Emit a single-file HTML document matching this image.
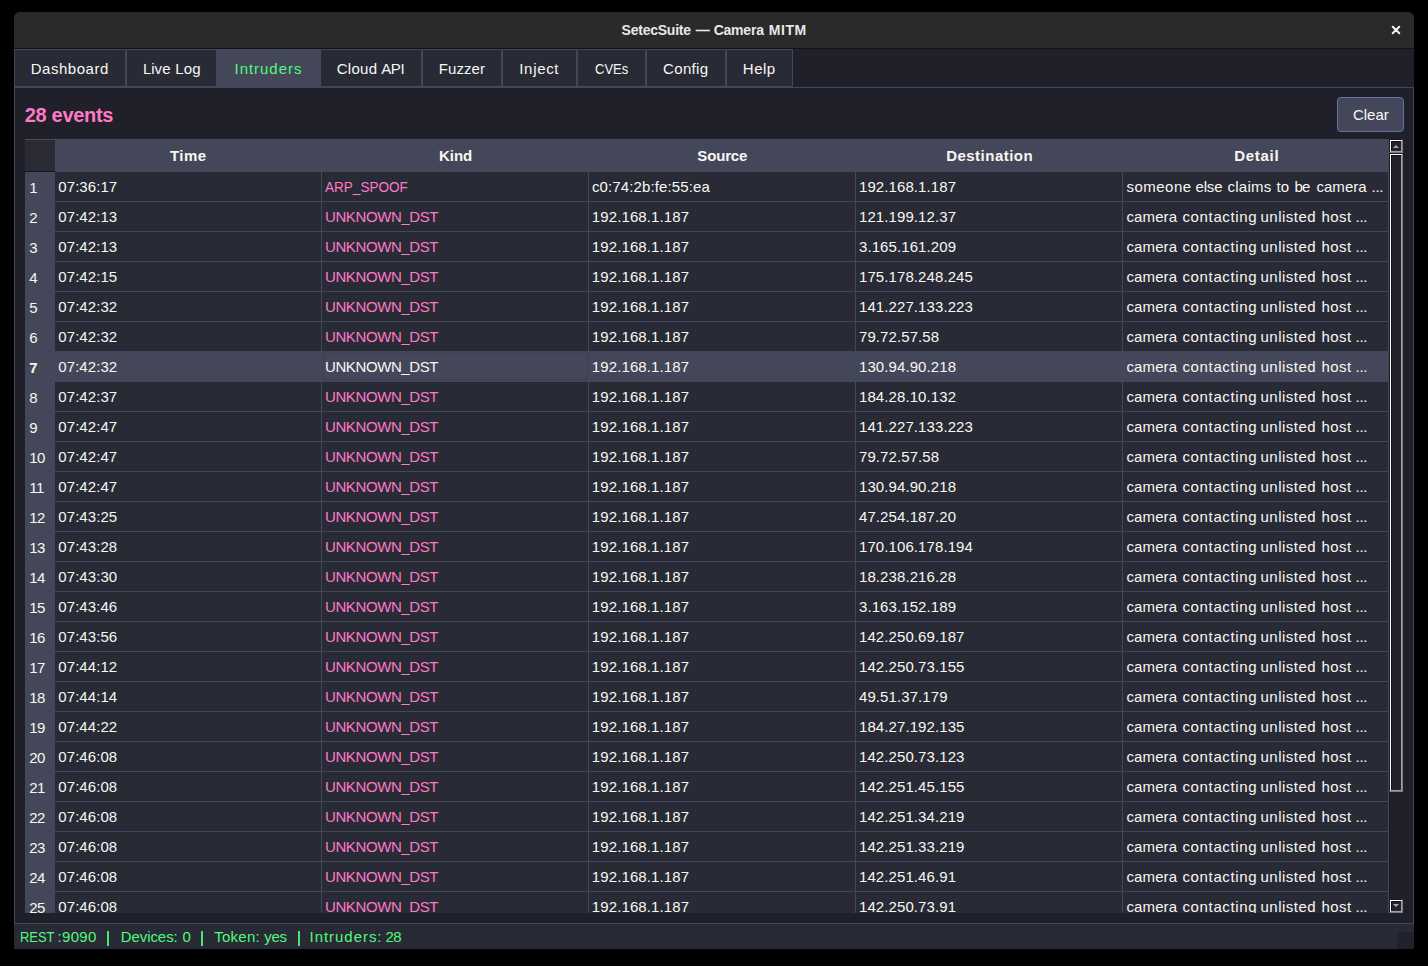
<!DOCTYPE html><html><head><meta charset="utf-8"><style>
*{margin:0;padding:0;box-sizing:border-box}
html,body{width:1428px;height:966px;background:#000;overflow:hidden}
body{position:relative;font-family:"Liberation Sans",sans-serif;font-size:15px;color:#f8f8f2}
.a{position:absolute}
.t{position:absolute;white-space:nowrap;line-height:17px;height:17px}
.b{font-weight:bold}
.win{left:14px;top:12px;width:1400px;height:937px;background:#1f2029;border-radius:6px 6px 0 0}
.title{left:14px;top:12px;width:1400px;height:36px;background:#2a2a2a;border-radius:6px 6px 0 0}
.tline{left:14px;top:48px;width:1400px;height:1px;background:#121212}
.tab{top:49px;height:38px;background:#282a36;border:1px solid #44475a}
.tab.sel{background:#44475a;border-color:#44475a}
.pane{left:14px;top:87px;width:1400px;height:837px;border:1px solid #44475a;background:#1f2029}
.btn{left:1337px;top:97px;width:67px;height:35px;background:#44475a;border:1px solid #6272a4;border-radius:4px}
.tbl{left:25px;top:139px;width:1364px;height:774px;overflow:hidden;background:#282a36}
.corner{left:0;top:0;width:30px;height:33px;background:#2a2b34;border-top:1px solid #4b4c58;border-bottom:1px solid #16161c}
.hdr{left:30px;top:0;width:1334px;height:33px;background:#44475a}
.vh{left:0;top:33px;width:30px;height:760px;background:#44475a}
.hl{left:30px;width:1334px;height:1px;background:#44475a}
.vl{top:33px;width:1px;height:760px;background:#44475a}
.pink{color:#ff79c6}
.sb{left:14px;top:924px;width:1400px;height:25px;background:#282a36}
.green{color:#50fa7b}
.grip{left:1397px;top:932px;width:17px;height:17px;background:#21222c}
</style></head><body>
<div class="a win"></div>
<div class="a title"></div><div class="a tline"></div>
<div class="t b" style="left:621.62px;top:21.6px;letter-spacing:-0.24px;font-size:14px;color:#e8e8e8">SetecSuite</div>
<div class="t b" style="left:695.74px;top:21.6px;letter-spacing:0.0px;font-size:14px;color:#e8e8e8">—</div>
<div class="t b" style="left:713.67px;top:21.6px;letter-spacing:-0.216px;font-size:14px;color:#e8e8e8">Camera</div>
<div class="t b" style="left:768.84px;top:21.6px;letter-spacing:0.51px;font-size:14px;color:#e8e8e8">MITM</div>
<svg class="a" style="left:1390px;top:24px" width="12" height="12" viewBox="0 0 12 12"><path d="M2.7 2.7L9.3 9.3M9.3 2.7L2.7 9.3" stroke="#f0f0f0" stroke-width="2" stroke-linecap="round"/></svg>
<div class="a pane"></div>
<div class="a tab" style="left:14px;width:112px"></div>
<div class="t " style="left:30.74px;top:60.0px;letter-spacing:0.529px">Dashboard</div>
<div class="a tab" style="left:126px;width:91px"></div>
<div class="t " style="left:142.92px;top:60.0px;letter-spacing:0.02px">Live</div>
<div class="t " style="left:175.29px;top:60.0px;letter-spacing:0.11px">Log</div>
<div class="a tab sel" style="left:217px;width:103px"></div>
<div class="t green" style="left:234.55px;top:60.0px;letter-spacing:0.957px">Intruders</div>
<div class="a tab" style="left:320px;width:102px"></div>
<div class="t " style="left:336.66px;top:60.0px;letter-spacing:0.312px">Cloud</div>
<div class="t " style="left:381.19px;top:60.0px;letter-spacing:-0.34px">API</div>
<div class="a tab" style="left:422px;width:80px"></div>
<div class="t " style="left:438.74px;top:60.0px;letter-spacing:0.072px">Fuzzer</div>
<div class="a tab" style="left:502px;width:75px"></div>
<div class="t " style="left:519.28px;top:60.0px;letter-spacing:0.684px">Inject</div>
<div class="a tab" style="left:577px;width:69px"></div>
<div class="t " style="left:594.73px;top:60.0px;letter-spacing:0px;transform:scaleX(0.866);transform-origin:0 0">CVEs</div>
<div class="a tab" style="left:646px;width:80px"></div>
<div class="t " style="left:663.0px;top:60.0px;letter-spacing:0.36px">Config</div>
<div class="a tab" style="left:726px;width:67px"></div>
<div class="t " style="left:742.83px;top:60.0px;letter-spacing:0.48px">Help</div>
<div class="t b pink" style="left:24.73px;top:103.0px;letter-spacing:-0.303px;font-size:20px;line-height:24px;height:24px">28 events</div>
<div class="a btn"></div>
<div class="t " style="left:1352.91px;top:106.1px;letter-spacing:0.017px">Clear</div>
<div class="a tbl">
<div class="a corner"></div><div class="a hdr"></div>
<div class="t b" style="left:144.91px;top:8.0px;letter-spacing:0.51px">Time</div>
<div class="t b" style="left:414.0px;top:8.0px;letter-spacing:-0.03px">Kind</div>
<div class="t b" style="left:672.36px;top:8.0px;letter-spacing:-0.18px">Source</div>
<div class="t b" style="left:921.18px;top:8.0px;letter-spacing:0.477px">Destination</div>
<div class="t b" style="left:1209.18px;top:8.0px;letter-spacing:0.72px">Detail</div>
<div class="a vh"></div>
<div class="a hl" style="top:62px"></div>
<div class="a hl" style="top:92px"></div>
<div class="a hl" style="top:122px"></div>
<div class="a hl" style="top:152px"></div>
<div class="a hl" style="top:182px"></div>
<div class="a hl" style="top:212px"></div>
<div class="a" style="left:30px;top:212px;width:1334px;height:31px;background:#44475a"></div>
<div class="a hl" style="top:242px"></div>
<div class="a hl" style="top:272px"></div>
<div class="a hl" style="top:302px"></div>
<div class="a hl" style="top:332px"></div>
<div class="a hl" style="top:362px"></div>
<div class="a hl" style="top:392px"></div>
<div class="a hl" style="top:422px"></div>
<div class="a hl" style="top:452px"></div>
<div class="a hl" style="top:482px"></div>
<div class="a hl" style="top:512px"></div>
<div class="a hl" style="top:542px"></div>
<div class="a hl" style="top:572px"></div>
<div class="a hl" style="top:602px"></div>
<div class="a hl" style="top:632px"></div>
<div class="a hl" style="top:662px"></div>
<div class="a hl" style="top:692px"></div>
<div class="a hl" style="top:722px"></div>
<div class="a hl" style="top:752px"></div>
<div class="a hl" style="top:782px"></div>
<div class="a vl" style="left:296px"></div>
<div class="a vl" style="left:563px"></div>
<div class="a vl" style="left:830px"></div>
<div class="a vl" style="left:1097px"></div>
<div class="a vl" style="left:1363px"></div>
<div class="a" style="left:298px;top:214px;width:265px;height:27px;border:1px solid #3d4052"></div>
<div class="t " style="left:33.36px;top:39.0px;letter-spacing:0.052px">07:36:17</div>
<div class="t pink" style="left:300.0px;top:39.0px;letter-spacing:0px;transform:scaleX(0.903);transform-origin:0 0">ARP_SPOOF</div>
<div class="t " style="left:566.91px;top:39.0px;letter-spacing:0.121px">c0:74:2b:fe:55:ea</div>
<div class="t " style="left:834.0px;top:39.0px;letter-spacing:0.088px">192.168.1.187</div>
<div class="t" style="left:1101.44px;top:39.0px;letter-spacing:0.495px">someone</div>
<div class="t" style="left:1170.5px;top:39.0px;letter-spacing:-0.15px">else</div>
<div class="t" style="left:1202.48px;top:39.0px;letter-spacing:0.246px">claims</div>
<div class="t" style="left:1251.4px;top:39.0px;letter-spacing:0.12px">to</div>
<div class="t" style="left:1269.46px;top:39.0px;letter-spacing:-0.78px">be</div>
<div class="t" style="left:1291.47px;top:39.0px;letter-spacing:0.03px">camera</div>
<div class="t" style="left:1346.55px;top:39.0px;letter-spacing:-0.285px">...</div>
<div class="t" style="left:4.190000000000001px;top:39.8px;letter-spacing:-0.45px">1</div>
<div class="t " style="left:33.36px;top:69.0px;letter-spacing:0.052px">07:42:13</div>
<div class="t pink" style="left:300.01px;top:69.0px;letter-spacing:-0.405px">UNKNOWN_DST</div>
<div class="t " style="left:566.82px;top:69.0px;letter-spacing:0.112px">192.168.1.187</div>
<div class="t " style="left:834.0px;top:69.0px;letter-spacing:0.088px">121.199.12.37</div>
<div class="t" style="left:1101.44px;top:69.0px;letter-spacing:0.12px">camera</div>
<div class="t" style="left:1157.47px;top:69.0px;letter-spacing:0.64px">contacting</div>
<div class="t" style="left:1235.48px;top:69.0px;letter-spacing:0.504px">unlisted</div>
<div class="t" style="left:1296.5px;top:69.0px;letter-spacing:0.45px">host</div>
<div class="t" style="left:1330.54px;top:69.0px;letter-spacing:-0.285px">...</div>
<div class="t" style="left:4.190000000000001px;top:69.8px;letter-spacing:-0.45px">2</div>
<div class="t " style="left:33.36px;top:99.0px;letter-spacing:0.052px">07:42:13</div>
<div class="t pink" style="left:300.01px;top:99.0px;letter-spacing:-0.405px">UNKNOWN_DST</div>
<div class="t " style="left:566.82px;top:99.0px;letter-spacing:0.112px">192.168.1.187</div>
<div class="t " style="left:834.0px;top:99.0px;letter-spacing:0.088px">3.165.161.209</div>
<div class="t" style="left:1101.44px;top:99.0px;letter-spacing:0.12px">camera</div>
<div class="t" style="left:1157.47px;top:99.0px;letter-spacing:0.64px">contacting</div>
<div class="t" style="left:1235.48px;top:99.0px;letter-spacing:0.504px">unlisted</div>
<div class="t" style="left:1296.5px;top:99.0px;letter-spacing:0.45px">host</div>
<div class="t" style="left:1330.54px;top:99.0px;letter-spacing:-0.285px">...</div>
<div class="t" style="left:4.190000000000001px;top:99.8px;letter-spacing:-0.45px">3</div>
<div class="t " style="left:33.36px;top:129.0px;letter-spacing:0.052px">07:42:15</div>
<div class="t pink" style="left:300.01px;top:129.0px;letter-spacing:-0.405px">UNKNOWN_DST</div>
<div class="t " style="left:566.82px;top:129.0px;letter-spacing:0.112px">192.168.1.187</div>
<div class="t " style="left:834.0px;top:129.0px;letter-spacing:0.088px">175.178.248.245</div>
<div class="t" style="left:1101.44px;top:129.0px;letter-spacing:0.12px">camera</div>
<div class="t" style="left:1157.47px;top:129.0px;letter-spacing:0.64px">contacting</div>
<div class="t" style="left:1235.48px;top:129.0px;letter-spacing:0.504px">unlisted</div>
<div class="t" style="left:1296.5px;top:129.0px;letter-spacing:0.45px">host</div>
<div class="t" style="left:1330.54px;top:129.0px;letter-spacing:-0.285px">...</div>
<div class="t" style="left:4.190000000000001px;top:129.8px;letter-spacing:-0.45px">4</div>
<div class="t " style="left:33.36px;top:159.0px;letter-spacing:0.052px">07:42:32</div>
<div class="t pink" style="left:300.01px;top:159.0px;letter-spacing:-0.405px">UNKNOWN_DST</div>
<div class="t " style="left:566.82px;top:159.0px;letter-spacing:0.112px">192.168.1.187</div>
<div class="t " style="left:834.0px;top:159.0px;letter-spacing:0.088px">141.227.133.223</div>
<div class="t" style="left:1101.44px;top:159.0px;letter-spacing:0.12px">camera</div>
<div class="t" style="left:1157.47px;top:159.0px;letter-spacing:0.64px">contacting</div>
<div class="t" style="left:1235.48px;top:159.0px;letter-spacing:0.504px">unlisted</div>
<div class="t" style="left:1296.5px;top:159.0px;letter-spacing:0.45px">host</div>
<div class="t" style="left:1330.54px;top:159.0px;letter-spacing:-0.285px">...</div>
<div class="t" style="left:4.190000000000001px;top:159.8px;letter-spacing:-0.45px">5</div>
<div class="t " style="left:33.36px;top:189.0px;letter-spacing:0.052px">07:42:32</div>
<div class="t pink" style="left:300.01px;top:189.0px;letter-spacing:-0.405px">UNKNOWN_DST</div>
<div class="t " style="left:566.82px;top:189.0px;letter-spacing:0.112px">192.168.1.187</div>
<div class="t " style="left:834.0px;top:189.0px;letter-spacing:0.088px">79.72.57.58</div>
<div class="t" style="left:1101.44px;top:189.0px;letter-spacing:0.12px">camera</div>
<div class="t" style="left:1157.47px;top:189.0px;letter-spacing:0.64px">contacting</div>
<div class="t" style="left:1235.48px;top:189.0px;letter-spacing:0.504px">unlisted</div>
<div class="t" style="left:1296.5px;top:189.0px;letter-spacing:0.45px">host</div>
<div class="t" style="left:1330.54px;top:189.0px;letter-spacing:-0.285px">...</div>
<div class="t" style="left:4.190000000000001px;top:189.8px;letter-spacing:-0.45px">6</div>
<div class="t " style="left:33.36px;top:219.0px;letter-spacing:0.052px">07:42:32</div>
<div class="t " style="left:300.01px;top:219.0px;letter-spacing:-0.405px">UNKNOWN_DST</div>
<div class="t " style="left:566.82px;top:219.0px;letter-spacing:0.112px">192.168.1.187</div>
<div class="t " style="left:834.0px;top:219.0px;letter-spacing:0.088px">130.94.90.218</div>
<div class="t" style="left:1101.44px;top:219.0px;letter-spacing:0.12px">camera</div>
<div class="t" style="left:1157.47px;top:219.0px;letter-spacing:0.64px">contacting</div>
<div class="t" style="left:1235.48px;top:219.0px;letter-spacing:0.504px">unlisted</div>
<div class="t" style="left:1296.5px;top:219.0px;letter-spacing:0.45px">host</div>
<div class="t" style="left:1330.54px;top:219.0px;letter-spacing:-0.285px">...</div>
<div class="t b" style="left:4.190000000000001px;top:219.8px;letter-spacing:-0.45px">7</div>
<div class="t " style="left:33.36px;top:249.0px;letter-spacing:0.052px">07:42:37</div>
<div class="t pink" style="left:300.01px;top:249.0px;letter-spacing:-0.405px">UNKNOWN_DST</div>
<div class="t " style="left:566.82px;top:249.0px;letter-spacing:0.112px">192.168.1.187</div>
<div class="t " style="left:834.0px;top:249.0px;letter-spacing:0.088px">184.28.10.132</div>
<div class="t" style="left:1101.44px;top:249.0px;letter-spacing:0.12px">camera</div>
<div class="t" style="left:1157.47px;top:249.0px;letter-spacing:0.64px">contacting</div>
<div class="t" style="left:1235.48px;top:249.0px;letter-spacing:0.504px">unlisted</div>
<div class="t" style="left:1296.5px;top:249.0px;letter-spacing:0.45px">host</div>
<div class="t" style="left:1330.54px;top:249.0px;letter-spacing:-0.285px">...</div>
<div class="t" style="left:4.190000000000001px;top:249.8px;letter-spacing:-0.45px">8</div>
<div class="t " style="left:33.36px;top:279.0px;letter-spacing:0.052px">07:42:47</div>
<div class="t pink" style="left:300.01px;top:279.0px;letter-spacing:-0.405px">UNKNOWN_DST</div>
<div class="t " style="left:566.82px;top:279.0px;letter-spacing:0.112px">192.168.1.187</div>
<div class="t " style="left:834.0px;top:279.0px;letter-spacing:0.088px">141.227.133.223</div>
<div class="t" style="left:1101.44px;top:279.0px;letter-spacing:0.12px">camera</div>
<div class="t" style="left:1157.47px;top:279.0px;letter-spacing:0.64px">contacting</div>
<div class="t" style="left:1235.48px;top:279.0px;letter-spacing:0.504px">unlisted</div>
<div class="t" style="left:1296.5px;top:279.0px;letter-spacing:0.45px">host</div>
<div class="t" style="left:1330.54px;top:279.0px;letter-spacing:-0.285px">...</div>
<div class="t" style="left:4.190000000000001px;top:279.8px;letter-spacing:-0.45px">9</div>
<div class="t " style="left:33.36px;top:309.0px;letter-spacing:0.052px">07:42:47</div>
<div class="t pink" style="left:300.01px;top:309.0px;letter-spacing:-0.405px">UNKNOWN_DST</div>
<div class="t " style="left:566.82px;top:309.0px;letter-spacing:0.112px">192.168.1.187</div>
<div class="t " style="left:834.0px;top:309.0px;letter-spacing:0.088px">79.72.57.58</div>
<div class="t" style="left:1101.44px;top:309.0px;letter-spacing:0.12px">camera</div>
<div class="t" style="left:1157.47px;top:309.0px;letter-spacing:0.64px">contacting</div>
<div class="t" style="left:1235.48px;top:309.0px;letter-spacing:0.504px">unlisted</div>
<div class="t" style="left:1296.5px;top:309.0px;letter-spacing:0.45px">host</div>
<div class="t" style="left:1330.54px;top:309.0px;letter-spacing:-0.285px">...</div>
<div class="t" style="left:4.190000000000001px;top:309.8px;letter-spacing:-0.45px">10</div>
<div class="t " style="left:33.36px;top:339.0px;letter-spacing:0.052px">07:42:47</div>
<div class="t pink" style="left:300.01px;top:339.0px;letter-spacing:-0.405px">UNKNOWN_DST</div>
<div class="t " style="left:566.82px;top:339.0px;letter-spacing:0.112px">192.168.1.187</div>
<div class="t " style="left:834.0px;top:339.0px;letter-spacing:0.088px">130.94.90.218</div>
<div class="t" style="left:1101.44px;top:339.0px;letter-spacing:0.12px">camera</div>
<div class="t" style="left:1157.47px;top:339.0px;letter-spacing:0.64px">contacting</div>
<div class="t" style="left:1235.48px;top:339.0px;letter-spacing:0.504px">unlisted</div>
<div class="t" style="left:1296.5px;top:339.0px;letter-spacing:0.45px">host</div>
<div class="t" style="left:1330.54px;top:339.0px;letter-spacing:-0.285px">...</div>
<div class="t" style="left:4.190000000000001px;top:339.8px;letter-spacing:-0.45px">11</div>
<div class="t " style="left:33.36px;top:369.0px;letter-spacing:0.052px">07:43:25</div>
<div class="t pink" style="left:300.01px;top:369.0px;letter-spacing:-0.405px">UNKNOWN_DST</div>
<div class="t " style="left:566.82px;top:369.0px;letter-spacing:0.112px">192.168.1.187</div>
<div class="t " style="left:834.0px;top:369.0px;letter-spacing:0.088px">47.254.187.20</div>
<div class="t" style="left:1101.44px;top:369.0px;letter-spacing:0.12px">camera</div>
<div class="t" style="left:1157.47px;top:369.0px;letter-spacing:0.64px">contacting</div>
<div class="t" style="left:1235.48px;top:369.0px;letter-spacing:0.504px">unlisted</div>
<div class="t" style="left:1296.5px;top:369.0px;letter-spacing:0.45px">host</div>
<div class="t" style="left:1330.54px;top:369.0px;letter-spacing:-0.285px">...</div>
<div class="t" style="left:4.190000000000001px;top:369.8px;letter-spacing:-0.45px">12</div>
<div class="t " style="left:33.36px;top:399.0px;letter-spacing:0.052px">07:43:28</div>
<div class="t pink" style="left:300.01px;top:399.0px;letter-spacing:-0.405px">UNKNOWN_DST</div>
<div class="t " style="left:566.82px;top:399.0px;letter-spacing:0.112px">192.168.1.187</div>
<div class="t " style="left:834.0px;top:399.0px;letter-spacing:0.088px">170.106.178.194</div>
<div class="t" style="left:1101.44px;top:399.0px;letter-spacing:0.12px">camera</div>
<div class="t" style="left:1157.47px;top:399.0px;letter-spacing:0.64px">contacting</div>
<div class="t" style="left:1235.48px;top:399.0px;letter-spacing:0.504px">unlisted</div>
<div class="t" style="left:1296.5px;top:399.0px;letter-spacing:0.45px">host</div>
<div class="t" style="left:1330.54px;top:399.0px;letter-spacing:-0.285px">...</div>
<div class="t" style="left:4.190000000000001px;top:399.8px;letter-spacing:-0.45px">13</div>
<div class="t " style="left:33.36px;top:429.0px;letter-spacing:0.052px">07:43:30</div>
<div class="t pink" style="left:300.01px;top:429.0px;letter-spacing:-0.405px">UNKNOWN_DST</div>
<div class="t " style="left:566.82px;top:429.0px;letter-spacing:0.112px">192.168.1.187</div>
<div class="t " style="left:834.0px;top:429.0px;letter-spacing:0.088px">18.238.216.28</div>
<div class="t" style="left:1101.44px;top:429.0px;letter-spacing:0.12px">camera</div>
<div class="t" style="left:1157.47px;top:429.0px;letter-spacing:0.64px">contacting</div>
<div class="t" style="left:1235.48px;top:429.0px;letter-spacing:0.504px">unlisted</div>
<div class="t" style="left:1296.5px;top:429.0px;letter-spacing:0.45px">host</div>
<div class="t" style="left:1330.54px;top:429.0px;letter-spacing:-0.285px">...</div>
<div class="t" style="left:4.190000000000001px;top:429.8px;letter-spacing:-0.45px">14</div>
<div class="t " style="left:33.36px;top:459.0px;letter-spacing:0.052px">07:43:46</div>
<div class="t pink" style="left:300.01px;top:459.0px;letter-spacing:-0.405px">UNKNOWN_DST</div>
<div class="t " style="left:566.82px;top:459.0px;letter-spacing:0.112px">192.168.1.187</div>
<div class="t " style="left:834.0px;top:459.0px;letter-spacing:0.088px">3.163.152.189</div>
<div class="t" style="left:1101.44px;top:459.0px;letter-spacing:0.12px">camera</div>
<div class="t" style="left:1157.47px;top:459.0px;letter-spacing:0.64px">contacting</div>
<div class="t" style="left:1235.48px;top:459.0px;letter-spacing:0.504px">unlisted</div>
<div class="t" style="left:1296.5px;top:459.0px;letter-spacing:0.45px">host</div>
<div class="t" style="left:1330.54px;top:459.0px;letter-spacing:-0.285px">...</div>
<div class="t" style="left:4.190000000000001px;top:459.8px;letter-spacing:-0.45px">15</div>
<div class="t " style="left:33.36px;top:489.0px;letter-spacing:0.052px">07:43:56</div>
<div class="t pink" style="left:300.01px;top:489.0px;letter-spacing:-0.405px">UNKNOWN_DST</div>
<div class="t " style="left:566.82px;top:489.0px;letter-spacing:0.112px">192.168.1.187</div>
<div class="t " style="left:834.0px;top:489.0px;letter-spacing:0.088px">142.250.69.187</div>
<div class="t" style="left:1101.44px;top:489.0px;letter-spacing:0.12px">camera</div>
<div class="t" style="left:1157.47px;top:489.0px;letter-spacing:0.64px">contacting</div>
<div class="t" style="left:1235.48px;top:489.0px;letter-spacing:0.504px">unlisted</div>
<div class="t" style="left:1296.5px;top:489.0px;letter-spacing:0.45px">host</div>
<div class="t" style="left:1330.54px;top:489.0px;letter-spacing:-0.285px">...</div>
<div class="t" style="left:4.190000000000001px;top:489.8px;letter-spacing:-0.45px">16</div>
<div class="t " style="left:33.36px;top:519.0px;letter-spacing:0.052px">07:44:12</div>
<div class="t pink" style="left:300.01px;top:519.0px;letter-spacing:-0.405px">UNKNOWN_DST</div>
<div class="t " style="left:566.82px;top:519.0px;letter-spacing:0.112px">192.168.1.187</div>
<div class="t " style="left:834.0px;top:519.0px;letter-spacing:0.088px">142.250.73.155</div>
<div class="t" style="left:1101.44px;top:519.0px;letter-spacing:0.12px">camera</div>
<div class="t" style="left:1157.47px;top:519.0px;letter-spacing:0.64px">contacting</div>
<div class="t" style="left:1235.48px;top:519.0px;letter-spacing:0.504px">unlisted</div>
<div class="t" style="left:1296.5px;top:519.0px;letter-spacing:0.45px">host</div>
<div class="t" style="left:1330.54px;top:519.0px;letter-spacing:-0.285px">...</div>
<div class="t" style="left:4.190000000000001px;top:519.8px;letter-spacing:-0.45px">17</div>
<div class="t " style="left:33.36px;top:549.0px;letter-spacing:0.052px">07:44:14</div>
<div class="t pink" style="left:300.01px;top:549.0px;letter-spacing:-0.405px">UNKNOWN_DST</div>
<div class="t " style="left:566.82px;top:549.0px;letter-spacing:0.112px">192.168.1.187</div>
<div class="t " style="left:834.0px;top:549.0px;letter-spacing:0.088px">49.51.37.179</div>
<div class="t" style="left:1101.44px;top:549.0px;letter-spacing:0.12px">camera</div>
<div class="t" style="left:1157.47px;top:549.0px;letter-spacing:0.64px">contacting</div>
<div class="t" style="left:1235.48px;top:549.0px;letter-spacing:0.504px">unlisted</div>
<div class="t" style="left:1296.5px;top:549.0px;letter-spacing:0.45px">host</div>
<div class="t" style="left:1330.54px;top:549.0px;letter-spacing:-0.285px">...</div>
<div class="t" style="left:4.190000000000001px;top:549.8px;letter-spacing:-0.45px">18</div>
<div class="t " style="left:33.36px;top:579.0px;letter-spacing:0.052px">07:44:22</div>
<div class="t pink" style="left:300.01px;top:579.0px;letter-spacing:-0.405px">UNKNOWN_DST</div>
<div class="t " style="left:566.82px;top:579.0px;letter-spacing:0.112px">192.168.1.187</div>
<div class="t " style="left:834.0px;top:579.0px;letter-spacing:0.088px">184.27.192.135</div>
<div class="t" style="left:1101.44px;top:579.0px;letter-spacing:0.12px">camera</div>
<div class="t" style="left:1157.47px;top:579.0px;letter-spacing:0.64px">contacting</div>
<div class="t" style="left:1235.48px;top:579.0px;letter-spacing:0.504px">unlisted</div>
<div class="t" style="left:1296.5px;top:579.0px;letter-spacing:0.45px">host</div>
<div class="t" style="left:1330.54px;top:579.0px;letter-spacing:-0.285px">...</div>
<div class="t" style="left:4.190000000000001px;top:579.8px;letter-spacing:-0.45px">19</div>
<div class="t " style="left:33.36px;top:609.0px;letter-spacing:0.052px">07:46:08</div>
<div class="t pink" style="left:300.01px;top:609.0px;letter-spacing:-0.405px">UNKNOWN_DST</div>
<div class="t " style="left:566.82px;top:609.0px;letter-spacing:0.112px">192.168.1.187</div>
<div class="t " style="left:834.0px;top:609.0px;letter-spacing:0.088px">142.250.73.123</div>
<div class="t" style="left:1101.44px;top:609.0px;letter-spacing:0.12px">camera</div>
<div class="t" style="left:1157.47px;top:609.0px;letter-spacing:0.64px">contacting</div>
<div class="t" style="left:1235.48px;top:609.0px;letter-spacing:0.504px">unlisted</div>
<div class="t" style="left:1296.5px;top:609.0px;letter-spacing:0.45px">host</div>
<div class="t" style="left:1330.54px;top:609.0px;letter-spacing:-0.285px">...</div>
<div class="t" style="left:4.190000000000001px;top:609.8px;letter-spacing:-0.45px">20</div>
<div class="t " style="left:33.36px;top:639.0px;letter-spacing:0.052px">07:46:08</div>
<div class="t pink" style="left:300.01px;top:639.0px;letter-spacing:-0.405px">UNKNOWN_DST</div>
<div class="t " style="left:566.82px;top:639.0px;letter-spacing:0.112px">192.168.1.187</div>
<div class="t " style="left:834.0px;top:639.0px;letter-spacing:0.088px">142.251.45.155</div>
<div class="t" style="left:1101.44px;top:639.0px;letter-spacing:0.12px">camera</div>
<div class="t" style="left:1157.47px;top:639.0px;letter-spacing:0.64px">contacting</div>
<div class="t" style="left:1235.48px;top:639.0px;letter-spacing:0.504px">unlisted</div>
<div class="t" style="left:1296.5px;top:639.0px;letter-spacing:0.45px">host</div>
<div class="t" style="left:1330.54px;top:639.0px;letter-spacing:-0.285px">...</div>
<div class="t" style="left:4.190000000000001px;top:639.8px;letter-spacing:-0.45px">21</div>
<div class="t " style="left:33.36px;top:669.0px;letter-spacing:0.052px">07:46:08</div>
<div class="t pink" style="left:300.01px;top:669.0px;letter-spacing:-0.405px">UNKNOWN_DST</div>
<div class="t " style="left:566.82px;top:669.0px;letter-spacing:0.112px">192.168.1.187</div>
<div class="t " style="left:834.0px;top:669.0px;letter-spacing:0.088px">142.251.34.219</div>
<div class="t" style="left:1101.44px;top:669.0px;letter-spacing:0.12px">camera</div>
<div class="t" style="left:1157.47px;top:669.0px;letter-spacing:0.64px">contacting</div>
<div class="t" style="left:1235.48px;top:669.0px;letter-spacing:0.504px">unlisted</div>
<div class="t" style="left:1296.5px;top:669.0px;letter-spacing:0.45px">host</div>
<div class="t" style="left:1330.54px;top:669.0px;letter-spacing:-0.285px">...</div>
<div class="t" style="left:4.190000000000001px;top:669.8px;letter-spacing:-0.45px">22</div>
<div class="t " style="left:33.36px;top:699.0px;letter-spacing:0.052px">07:46:08</div>
<div class="t pink" style="left:300.01px;top:699.0px;letter-spacing:-0.405px">UNKNOWN_DST</div>
<div class="t " style="left:566.82px;top:699.0px;letter-spacing:0.112px">192.168.1.187</div>
<div class="t " style="left:834.0px;top:699.0px;letter-spacing:0.088px">142.251.33.219</div>
<div class="t" style="left:1101.44px;top:699.0px;letter-spacing:0.12px">camera</div>
<div class="t" style="left:1157.47px;top:699.0px;letter-spacing:0.64px">contacting</div>
<div class="t" style="left:1235.48px;top:699.0px;letter-spacing:0.504px">unlisted</div>
<div class="t" style="left:1296.5px;top:699.0px;letter-spacing:0.45px">host</div>
<div class="t" style="left:1330.54px;top:699.0px;letter-spacing:-0.285px">...</div>
<div class="t" style="left:4.190000000000001px;top:699.8px;letter-spacing:-0.45px">23</div>
<div class="t " style="left:33.36px;top:729.0px;letter-spacing:0.052px">07:46:08</div>
<div class="t pink" style="left:300.01px;top:729.0px;letter-spacing:-0.405px">UNKNOWN_DST</div>
<div class="t " style="left:566.82px;top:729.0px;letter-spacing:0.112px">192.168.1.187</div>
<div class="t " style="left:834.0px;top:729.0px;letter-spacing:0.088px">142.251.46.91</div>
<div class="t" style="left:1101.44px;top:729.0px;letter-spacing:0.12px">camera</div>
<div class="t" style="left:1157.47px;top:729.0px;letter-spacing:0.64px">contacting</div>
<div class="t" style="left:1235.48px;top:729.0px;letter-spacing:0.504px">unlisted</div>
<div class="t" style="left:1296.5px;top:729.0px;letter-spacing:0.45px">host</div>
<div class="t" style="left:1330.54px;top:729.0px;letter-spacing:-0.285px">...</div>
<div class="t" style="left:4.190000000000001px;top:729.8px;letter-spacing:-0.45px">24</div>
<div class="t " style="left:33.36px;top:759.0px;letter-spacing:0.052px">07:46:08</div>
<div class="t pink" style="left:300.01px;top:759.0px;letter-spacing:-0.405px">UNKNOWN_DST</div>
<div class="t " style="left:566.82px;top:759.0px;letter-spacing:0.112px">192.168.1.187</div>
<div class="t " style="left:834.0px;top:759.0px;letter-spacing:0.088px">142.250.73.91</div>
<div class="t" style="left:1101.44px;top:759.0px;letter-spacing:0.12px">camera</div>
<div class="t" style="left:1157.47px;top:759.0px;letter-spacing:0.64px">contacting</div>
<div class="t" style="left:1235.48px;top:759.0px;letter-spacing:0.504px">unlisted</div>
<div class="t" style="left:1296.5px;top:759.0px;letter-spacing:0.45px">host</div>
<div class="t" style="left:1330.54px;top:759.0px;letter-spacing:-0.285px">...</div>
<div class="t" style="left:4.190000000000001px;top:759.8px;letter-spacing:-0.45px">25</div>
</div>
<div class="a" style="left:1389px;top:139px;width:1px;height:774px;background:#1b1c24"></div>
<div class="a" style="left:1389px;top:139px;width:14px;height:14px;background:#21222c;border-top:1px solid #1a1b22;border-left:1px solid #1a1b22;border-right:1px solid #7f7f7f;border-bottom:1px solid #7f7f7f"><div style="width:100%;height:100%;border-top:1px solid #fff;border-left:1px solid #fff;border-right:1px solid #a0a0a0;border-bottom:1px solid #a0a0a0"><div style="width:100%;height:100%;border-top:1px solid #101018;border-left:1px solid #101018"></div></div></div>
<svg class="a" style="left:1392px;top:143px" width="8" height="6"><path d="M1 5L4 2L7 5Z" fill="#a8a8a8"/></svg>
<div class="a" style="left:1389px;top:153px;width:14px;height:639px;background:#21222c;border-top:1px solid #1a1b22;border-left:1px solid #1a1b22;border-right:1px solid #7f7f7f;border-bottom:1px solid #7f7f7f"><div style="width:100%;height:100%;border-top:1px solid #fff;border-left:1px solid #fff;border-right:1px solid #a0a0a0;border-bottom:1px solid #a0a0a0"><div style="width:100%;height:100%;border-top:1px solid #101018;border-left:1px solid #101018"></div></div></div>
<div class="a" style="left:1389px;top:899px;width:14px;height:14px;background:#21222c;border-top:1px solid #1a1b22;border-left:1px solid #1a1b22;border-right:1px solid #7f7f7f;border-bottom:1px solid #7f7f7f"><div style="width:100%;height:100%;border-top:1px solid #fff;border-left:1px solid #fff;border-right:1px solid #a0a0a0;border-bottom:1px solid #a0a0a0"><div style="width:100%;height:100%;border-top:1px solid #101018;border-left:1px solid #101018"></div></div></div>
<svg class="a" style="left:1392px;top:903px" width="8" height="6"><path d="M1 1L4 4L7 1Z" fill="#a8a8a8"/></svg>
<div class="a sb"></div>
<div class="a grip"></div>
<div class="t green" style="left:19.75px;top:928.2px;letter-spacing:0px;transform:scaleX(0.862);transform-origin:0 0">REST</div>
<div class="t green" style="left:57.58px;top:928.2px;letter-spacing:0.285px">:9090</div>
<div class="t green" style="left:120.7px;top:928.2px;letter-spacing:-0.064px">Devices:</div>
<div class="t green" style="left:182.45px;top:928.2px;letter-spacing:0.0px">0</div>
<div class="t green" style="left:214.2px;top:928.2px;letter-spacing:0.27px">Token:</div>
<div class="t green" style="left:264.2px;top:928.2px;letter-spacing:-0.225px">yes</div>
<div class="t green" style="left:309.6px;top:928.2px;letter-spacing:0.95px">Intruders:</div>
<div class="t green" style="left:385.45px;top:928.2px;letter-spacing:-0.45px">28</div>
<div class="a" style="left:107px;top:931px;width:2px;height:15px;background:#50fa7b;opacity:.9"></div>
<div class="a" style="left:201px;top:931px;width:2px;height:15px;background:#50fa7b;opacity:.9"></div>
<div class="a" style="left:298px;top:931px;width:2px;height:15px;background:#50fa7b;opacity:.9"></div>
</body></html>
